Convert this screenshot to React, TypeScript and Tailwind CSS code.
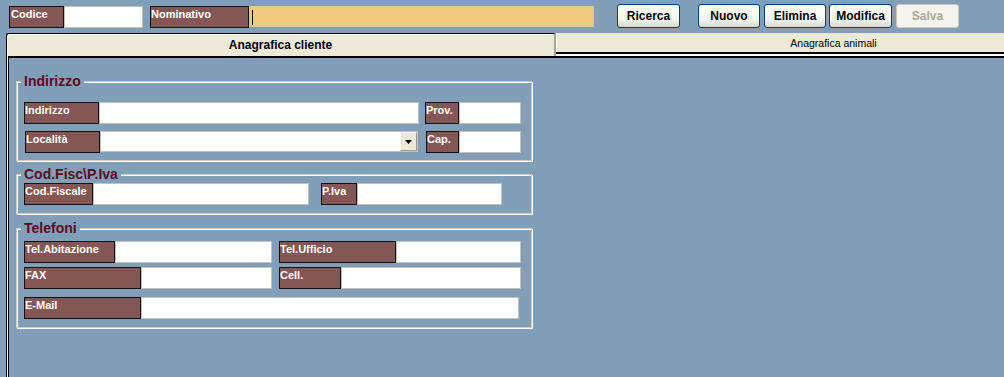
import React from "react";

const BG = "bg-[#829fb9]";

function Label({ className = "", children }: { className?: string; children: React.ReactNode }) {
  return (
    <div
      className={`shrink-0 h-[22px] bg-[#845656] border border-[#111111] text-white font-bold text-[11px] leading-[13px] pt-[1px] whitespace-nowrap overflow-hidden ${className}`}
    >
      {children}
    </div>
  );
}

function Field({ className = "" }: { className?: string }) {
  return <div className={`shrink-0 h-[22px] bg-white border border-[#c3c0b6] ${className}`} />;
}

function Btn({
  className = "",
  children,
  disabled = false,
}: {
  className?: string;
  children: React.ReactNode;
  disabled?: boolean;
}) {
  return (
    <div
      className={`h-[24px] shrink-0 flex items-center justify-center rounded-[3px] border text-[12px] font-bold ${
        disabled
          ? "border-[#cac8bb] bg-[#f4f3ee] text-[#aca899]"
          : "border-[#003c74] bg-[linear-gradient(180deg,#ffffff_0%,#f5f5f1_65%,#d9d6cb_100%)] text-black"
      } ${className}`}
    >
      {children}
    </div>
  );
}

function Group({
  title,
  className = "",
  children,
}: {
  title: string;
  className?: string;
  children: React.ReactNode;
}) {
  return (
    <div
      className={`relative w-[516px] border border-[#cfccc2] shadow-[inset_1px_1px_0_#ffffff,1px_1px_0_#ffffff] pl-[7px] ${className}`}
    >
      <div
        className={`absolute -top-[8px] left-[4px] ${BG} px-[3px] text-[14px] leading-[14px] font-bold text-[#5e0b1e] whitespace-nowrap`}
      >
        {title}
      </div>
      {children}
    </div>
  );
}

export default function App() {
  return (
    <div
      className={`w-[1004px] h-[377px] overflow-hidden ${BG} font-['Liberation_Sans',Arial,sans-serif] text-black`}
    >
      {/* Top bar */}
      <div className="flex items-start h-[33px] pt-[6px] pl-[9px]">
        <Label className="w-[55px] pl-[1px]">Codice</Label>
        <Field className="w-[79px] h-[21px]" />
        <Label className="ml-[7px] w-[99px]">Nominativo</Label>
        <div className="shrink-0 w-[345px] h-[21px] bg-[#edcb7b] border border-[#dbc893] pl-[2px] pt-[3px]">
          <div className="w-px h-[15px] bg-black" />
        </div>
        <div className="ml-[23px] -mt-[2px] flex">
          <Btn className="w-[63px]">Ricerca</Btn>
          <Btn className="ml-[18px] w-[62px]">Nuovo</Btn>
          <Btn className="ml-[4px] w-[62px]">Elimina</Btn>
          <Btn className="ml-[3px] w-[63px]">Modifica</Btn>
          <Btn className="ml-[4px] w-[63px]" disabled>
            Salva
          </Btn>
        </div>
      </div>

      {/* Tabs */}
      <div className="flex h-[23px]">
        <div className="ml-[6px] w-[550px] shrink-0 h-[23px] bg-[#ece9d8] border-t border-l border-black rounded-tl-[3px] shadow-[inset_1px_1px_0_#ffffff] border-r-2 border-r-[#a8a597] flex items-center justify-center text-[12px] font-bold">
          Anagrafica cliente
        </div>
        <div className="w-[550px] shrink-0 flex flex-col">
          <div className="h-[19px] bg-[#ece9d8] border-l border-white flex items-center justify-center pt-[2px] pl-[4px] text-[10.5px]">
            Anagrafica animali
          </div>
          <div className="h-[2px] bg-black" />
          <div className="h-[2px] bg-white" />
        </div>
      </div>

      {/* Tab page */}
      <div className="ml-[6px] h-[321px] border-l border-black">
        <div className="h-full border-l border-white">
          <div className="h-full border-l border-black">
            <div className="h-full border-t-2 border-black pl-[7px] pt-[23px]">
              <Group title="Indirizzo" className="h-[80px] pt-[20px]">
                <div className="flex items-start">
                  <Label className="w-[75px]">Indirizzo</Label>
                  <Field className="w-[320px]" />
                  <Label className="ml-[6px] w-[34px]">Prov.</Label>
                  <Field className="w-[62px]" />
                </div>
                <div className="flex items-start mt-[7px]">
                  <Label className="ml-[1px] w-[75px]">Località</Label>
                  <div className="shrink-0 w-[318px] h-[21px] bg-white border border-[#c3c0b6] flex justify-end">
                    <div className="w-[17px] h-[19px] bg-[#ece9d8] border border-t-white border-l-white border-r-[#a09d90] border-b-[#a09d90] flex items-center justify-center">
                      <svg width="7" height="4" viewBox="0 0 7 4">
                        <path d="M0 0h7L3.5 4z" fill="#000000" />
                      </svg>
                    </div>
                  </div>
                  <Label className="ml-[8px] w-[33px]">Cap.</Label>
                  <Field className="w-[62px]" />
                </div>
              </Group>

              <Group title={"Cod.Fisc\\P.Iva"} className="mt-[13px] h-[40px] pt-[8px]">
                <div className="flex items-start">
                  <Label className="w-[69px] h-[21px]">Cod.Fiscale</Label>
                  <Field className="w-[216px] h-[21px]" />
                  <Label className="ml-[12px] w-[36px] h-[21px]">P.Iva</Label>
                  <Field className="w-[145px] h-[21px]" />
                </div>
              </Group>

              <Group title="Telefoni" className="mt-[14px] h-[100px] pt-[12px]">
                <div className="flex items-start">
                  <Label className="w-[91px]">Tel.Abitazione</Label>
                  <Field className="w-[157px]" />
                  <Label className="ml-[7px] w-[117px]">Tel.Ufficio</Label>
                  <Field className="w-[125px]" />
                </div>
                <div className="flex items-start mt-[4px]">
                  <Label className="w-[117px]">FAX</Label>
                  <Field className="w-[131px]" />
                  <Label className="ml-[7px] w-[62px]">Cell.</Label>
                  <Field className="w-[180px]" />
                </div>
                <div className="flex items-start mt-[8px]">
                  <Label className="w-[117px]">E-Mail</Label>
                  <Field className="w-[378px]" />
                </div>
              </Group>
            </div>
          </div>
        </div>
      </div>
    </div>
  );
}
